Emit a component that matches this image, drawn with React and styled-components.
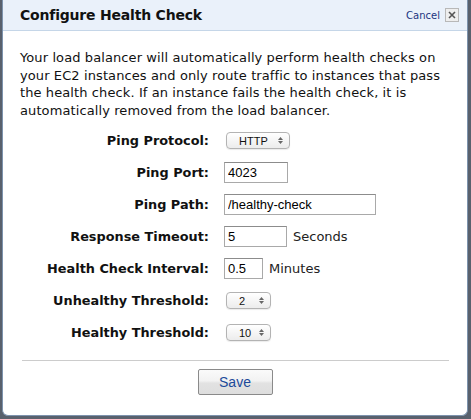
import React from "react";
import styled, { createGlobalStyle } from "styled-components";

const GlobalStyle = createGlobalStyle`
  html, body {
    margin: 0;
    padding: 0;
    background: #59616d;
  }
  body {
    font-family: "DejaVu Sans", Verdana, sans-serif;
  }
`;

const Page = styled.div`
  width: 471px;
  height: 419px;
  padding: 0 3px 3px 2px;
  box-sizing: border-box;
`;

const Dialog = styled.div`
  height: 100%;
  background: #ffffff;
  border: 1px solid #7d93ad;
  border-top: none;
  border-radius: 0 0 6px 6px;
  box-sizing: border-box;
  display: flex;
  flex-direction: column;
  overflow: hidden;
`;

const Header = styled.div`
  height: 31px;
  background: #eaf1fa;
  border-bottom: 1px solid #c5d6e8;
  display: flex;
  align-items: center;
  justify-content: space-between;
  padding: 0 8px 0 17px;
  box-sizing: border-box;
`;

const Title = styled.h1`
  margin: 0;
  font-size: 14px;
  font-weight: bold;
  color: #111;
  letter-spacing: -0.2px;
`;

const HeaderActions = styled.div`
  display: flex;
  align-items: center;
  gap: 5px;
`;

const CancelLink = styled.a`
  font-family: "DejaVu Sans", Verdana, sans-serif;
  font-size: 10px;
  color: #1c3580;
  text-decoration: none;
`;

const CloseBox = styled.span`
  width: 12px;
  height: 12px;
  border: 1px solid #b8b8b8;
  background: #eeeeee;
  display: flex;
  align-items: center;
  justify-content: center;
`;

const Body = styled.div`
  flex: 1;
  padding: 18px 17px 0 17px;
  display: flex;
  flex-direction: column;
`;

const Intro = styled.p`
  margin: 0;
  font-size: 13px;
  letter-spacing: 0.1px;
  line-height: 17.7px;
  color: #111;
`;

const Form = styled.div`
  display: grid;
  grid-template-columns: 189px 1fr;
  column-gap: 15px;
  grid-auto-rows: 32px;
  align-items: center;
  margin-top: 5px;
`;

const Label = styled.label`
  text-align: right;
  font-size: 12.85px;
  font-weight: bold;
  color: #111;
`;

const Field = styled.div`
  display: flex;
  align-items: center;
  gap: 6px;
  font-size: 13px;
  color: #222;
`;

const TextInput = styled.input`
  width: ${(p) => p.w}px;
  height: 21px;
  box-sizing: border-box;
  border: 1px solid #a9a9a9;
  border-top-color: #8c8c8c;
  padding: 1px 3px;
  font-family: "Liberation Sans", Arial, sans-serif;
  font-size: 13px;
  color: #000;
  outline: none;
`;

const Select = styled.div`
  margin-left: 2px;
  width: ${(p) => p.w}px;
  height: 17px;
  box-sizing: border-box;
  border: 1px solid #b3b3b3;
  border-radius: 4px;
  background: linear-gradient(#ffffff, #ececec);
  box-shadow: 0 1px 1px rgba(0, 0, 0, 0.08);
  display: flex;
  align-items: center;
  justify-content: space-between;
  padding: 0 6px 0 12px;
  font-family: "Liberation Sans", Arial, sans-serif;
  font-size: 11px;
  color: #111;
`;

const Arrows = styled.span`
  display: flex;
  flex-direction: column;
  align-items: center;
  gap: 1px;
`;

const Divider = styled.hr`
  border: none;
  border-top: 1px solid #cccccc;
  margin: 11px 1px 0 2px;
`;

const Footer = styled.div`
  display: flex;
  justify-content: center;
  padding-top: 8px;
`;

const SaveButton = styled.button`
  width: 75px;
  height: 26px;
  border: 1px solid #8a8a8a;
  border-radius: 2px;
  background: linear-gradient(#fafafa 0%, #f2f2f2 45%, #e2e2e2 55%, #dedede 100%);
  font-family: "Liberation Sans", Arial, sans-serif;
  font-size: 14px;
  color: #1d4a9a;
  cursor: pointer;
`;

const SelectArrows = () => (
  <Arrows>
    <svg width="5" height="3" viewBox="0 0 5 3">
      <path d="M0 3 L2.5 0 L5 3 Z" fill="#666" />
    </svg>
    <svg width="5" height="3" viewBox="0 0 5 3">
      <path d="M0 0 L2.5 3 L5 0 Z" fill="#666" />
    </svg>
  </Arrows>
);

const SelectBox = ({ value, w }) => (
  <Select w={w}>
    <span>{value}</span>
    <SelectArrows />
  </Select>
);

export default function App() {
  return (
    <>
      <GlobalStyle />
      <Page>
        <Dialog>
          <Header>
            <Title>Configure Health Check</Title>
            <HeaderActions>
              <CancelLink href="#">Cancel</CancelLink>
              <CloseBox>
                <svg width="8" height="8" viewBox="0 0 8 8">
                  <path d="M1 1 L7 7 M7 1 L1 7" stroke="#555" strokeWidth="1.6" />
                </svg>
              </CloseBox>
            </HeaderActions>
          </Header>
          <Body>
            <Intro>
              Your load balancer will automatically perform health checks on
              your EC2 instances and only route traffic to instances that pass
              the health check. If an instance fails the health check, it is
              automatically removed from the load balancer.
            </Intro>
            <Form>
              <Label>Ping Protocol:</Label>
              <Field>
                <SelectBox value="HTTP" w={64} />
              </Field>
              <Label>Ping Port:</Label>
              <Field>
                <TextInput w={64} defaultValue="4023" />
              </Field>
              <Label>Ping Path:</Label>
              <Field>
                <TextInput w={152} defaultValue="/healthy-check" />
              </Field>
              <Label>Response Timeout:</Label>
              <Field>
                <TextInput w={63} defaultValue="5" />
                Seconds
              </Field>
              <Label>Health Check Interval:</Label>
              <Field>
                <TextInput w={39} defaultValue="0.5" />
                Minutes
              </Field>
              <Label>Unhealthy Threshold:</Label>
              <Field>
                <SelectBox value="2" w={45} />
              </Field>
              <Label>Healthy Threshold:</Label>
              <Field>
                <SelectBox value="10" w={45} />
              </Field>
            </Form>
            <Divider />
            <Footer>
              <SaveButton>Save</SaveButton>
            </Footer>
          </Body>
        </Dialog>
      </Page>
    </>
  );
}
